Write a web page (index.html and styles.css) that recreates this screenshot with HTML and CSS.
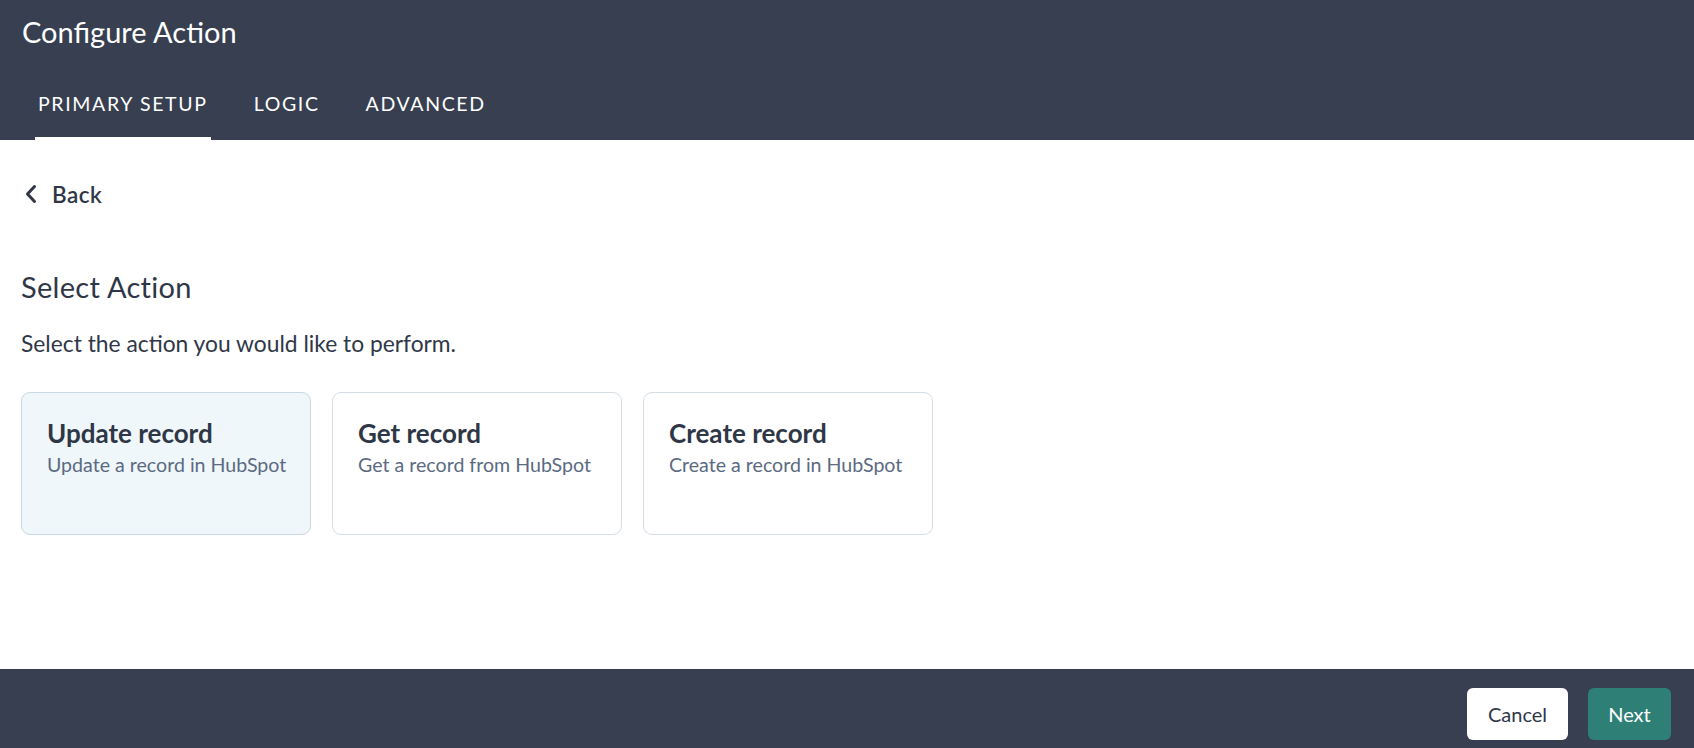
FILE: index.html
```html
<!DOCTYPE html>
<html>
<head>
<meta charset="utf-8">
<link rel="stylesheet" href="styles.css">
</head>
<body>
<div class="app">
  <header class="header">
    <div class="title">Configure Action</div>
    <nav class="tabs">
      <div class="tab active">PRIMARY SETUP</div>
      <div class="tab">LOGIC</div>
      <div class="tab">ADVANCED</div>
    </nav>
  </header>
  <main class="main">
    <div class="back">
      <svg class="chev" width="14" height="20" viewBox="0 0 14 20"><path d="M10.5 2.5 L3.5 10 L10.5 17.5" fill="none" stroke="#2f3747" stroke-width="3" stroke-linecap="round" stroke-linejoin="round"/></svg>
      <span>Back</span>
    </div>
    <h2 class="heading">Select Action</h2>
    <p class="desc">Select the action you would like to perform.</p>
    <div class="cards">
      <div class="card selected">
        <div class="card-title">Update record</div>
        <div class="card-desc">Update a record in HubSpot</div>
      </div>
      <div class="card">
        <div class="card-title">Get record</div>
        <div class="card-desc">Get a record from HubSpot</div>
      </div>
      <div class="card">
        <div class="card-title">Create record</div>
        <div class="card-desc">Create a record in HubSpot</div>
      </div>
    </div>
  </main>
  <footer class="footer">
    <button class="btn btn-cancel">Cancel</button>
    <button class="btn btn-next">Next</button>
  </footer>
</div>
</body>
</html>
```
FILE: styles.css
```css
* { box-sizing: border-box; }
html, body { margin: 0; padding: 0; }
body {
  font-family: "Lato", "Noto Sans", sans-serif;
  color: #2f3747;
  background: #fff;
}
.app {
  width: 1694px;
  height: 748px;
  display: flex;
  flex-direction: column;
}
.header {
  background: #373f50;
  height: 140px;
  padding-left: 22px;
  display: flex;
  flex-direction: column;
}
.title {
  color: #fff;
  font-size: 29px;
  line-height: 34px;
  margin-top: 15px;
}
.tabs {
  display: flex;
  gap: 40px;
  margin-top: auto;
  padding-left: 13px;
}
.tab {
  color: #fff;
  font-size: 19.5px;
  letter-spacing: 1.65px;
  padding: 5px 3px 0;
  height: 55px;
  line-height: 28px;
  border-bottom: 3px solid transparent;
}
.tab.active { border-bottom-color: #fff; }
.main {
  flex: 1;
  padding: 0 21px;
}
.back {
  display: flex;
  align-items: center;
  gap: 14px;
  margin-top: 41px;
  height: 26px;
  font-size: 22.5px;
  letter-spacing: 0.5px;
  font-weight: 600;
  padding-left: 3px;
}
.chev { display: block; }
.heading {
  margin: 62px 0 0;
  font-size: 29px;
  letter-spacing: 0.3px;
  font-weight: 400;
  line-height: 36px;
}
.desc {
  margin: 24px 0 0;
  font-size: 22.8px;
  line-height: 28px;
}
.cards {
  display: flex;
  gap: 21px;
  margin-top: 35px;
}
.card {
  width: 290px;
  height: 143px;
  border: 1px solid #d6dde4;
  border-radius: 9px;
  padding: 25px 10px 25px 25px;
  background: #fff;
}
.card.selected {
  background: #eff7fa;
  border-color: #c9d8e0;
}
.card-title {
  font-size: 26px;
  font-weight: 700;
  line-height: 30px;
  white-space: nowrap;
}
.card-desc {
  margin-top: 5px;
  font-size: 19.6px;
  line-height: 24px;
  color: #5b6a82;
  white-space: nowrap;
}
.footer {
  height: 79px;
  background: #373f50;
  display: flex;
  justify-content: flex-end;
  align-items: flex-start;
  gap: 20px;
  padding: 19px 23px 0 0;
}
.btn {
  height: 52px;
  border: none;
  border-radius: 6px;
  font-family: inherit;
  font-size: 20px;
  padding: 0;
}
.btn-cancel {
  width: 101px;
  background: #fff;
  color: #2f3747;
}
.btn-next {
  width: 83px;
  background: #2e7f76;
  color: #fff;
}
```
